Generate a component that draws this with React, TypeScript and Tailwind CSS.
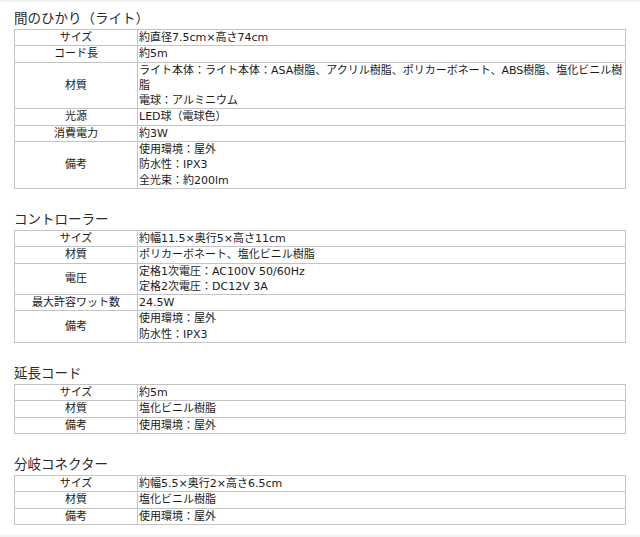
type Row = { label: string; lines: string[] };

interface Section {
  title: string;
  rows: Row[];
}

const sections: Section[] = [
  {
    title: "間のひかり（ライト）",
    rows: [
      { label: "サイズ", lines: ["約直径7.5cm×高さ74cm"] },
      { label: "コード長", lines: ["約5m"] },
      {
        label: "材質",
        lines: [
          "ライト本体：ライト本体：ASA樹脂、アクリル樹脂、ポリカーボネート、ABS樹脂、塩化ビニル樹脂",
          "電球：アルミニウム",
        ],
      },
      { label: "光源", lines: ["LED球（電球色）"] },
      { label: "消費電力", lines: ["約3W"] },
      { label: "備考", lines: ["使用環境：屋外", "防水性：IPX3", "全光束：約200lm"] },
    ],
  },
  {
    title: "コントローラー",
    rows: [
      { label: "サイズ", lines: ["約幅11.5×奥行5×高さ11cm"] },
      { label: "材質", lines: ["ポリカーボネート、塩化ビニル樹脂"] },
      { label: "電圧", lines: ["定格1次電圧：AC100V 50/60Hz", "定格2次電圧：DC12V 3A"] },
      { label: "最大許容ワット数", lines: ["24.5W"] },
      { label: "備考", lines: ["使用環境：屋外", "防水性：IPX3"] },
    ],
  },
  {
    title: "延長コード",
    rows: [
      { label: "サイズ", lines: ["約5m"] },
      { label: "材質", lines: ["塩化ビニル樹脂"] },
      { label: "備考", lines: ["使用環境：屋外"] },
    ],
  },
  {
    title: "分岐コネクター",
    rows: [
      { label: "サイズ", lines: ["約幅5.5×奥行2×高さ6.5cm"] },
      { label: "材質", lines: ["塩化ビニル樹脂"] },
      { label: "備考", lines: ["使用環境：屋外"] },
    ],
  },
];

export default function App() {
  return (
    <div
      className="w-[640px] h-[537px] bg-white text-[#1a1a1a] overflow-hidden border-t-2 border-b-2 border-[#f2f2f2]"
      style={{ fontFamily: '"DejaVu Sans", "Noto Sans CJK JP", sans-serif' }}
    >
      <div className="pl-[14px] pr-[14px] pt-[7px]">
        {sections.map((sec, i) => (
          <section key={sec.title} className={i === 0 ? "" : "mt-[21px]"}>
            <h2 className="text-[13.5px] leading-[18px] text-[#2a2a2a] mb-[2px]">{sec.title}</h2>
            <table className="w-[612px] border-collapse text-[11px] leading-[15.3px]">
              <tbody>
                {sec.rows.map((row) => (
                  <tr key={row.label}>
                    <td className="w-[123px] border border-[#c4c4c4] text-center align-middle p-0">
                      {row.label}
                    </td>
                    <td className="border border-[#c4c4c4] pl-[1px] pr-[1px] py-0 align-top">
                      {row.lines.map((line) => (
                        <div key={line}>{line}</div>
                      ))}
                    </td>
                  </tr>
                ))}
              </tbody>
            </table>
          </section>
        ))}
      </div>
    </div>
  );
}
